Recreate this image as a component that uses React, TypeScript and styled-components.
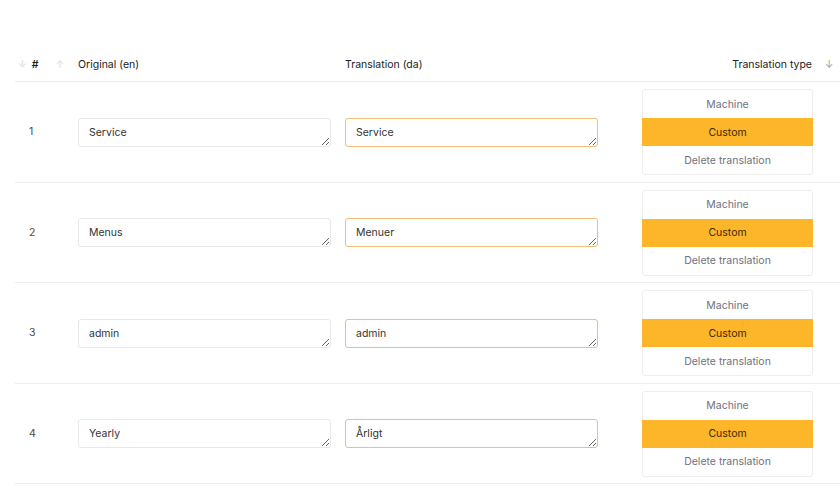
import styled, { createGlobalStyle } from 'styled-components';

const GlobalStyle = createGlobalStyle`
  body {
    margin: 0;
    background: #fff;
    font-family: Inter, "Open Sans", Arial, sans-serif;
    color: #2b2b2b;
  }
`;

type Row = { id: number; original: string; translation: string };

const rows: Row[] = [
  { id: 1, original: 'Service', translation: 'Service' },
  { id: 2, original: 'Menus', translation: 'Menuer' },
  { id: 3, original: 'admin', translation: 'admin' },
  { id: 4, original: 'Yearly', translation: 'Årligt' },
];

const COLS = '63px 267px 297px 171px 1fr';

const Page = styled.div`
  padding: 47px 0 0 15px;
  width: 825px;
`;

const HeaderRow = styled.div`
  display: grid;
  grid-template-columns: ${COLS};
  height: 34px;
  align-items: center;
  border-bottom: 1px solid #ececec;
  font-size: 10.5px;
  color: #222;
`;

const HashCell = styled.div`
  display: flex;
  align-items: center;
  gap: 5px;
  padding-left: 3px;
  font-weight: 600;
`;

const SortArrow = styled.span<{ $light?: boolean }>`
  color: ${(p) => (p.$light ? '#e2e2e2' : '#a0a0a0')};
  font-size: 10px;
  line-height: 1;
`;

const UpArrow = styled(SortArrow)`
  margin-left: 12px;
`;

const HeadText = styled.div<{ $right?: boolean }>`
  text-align: ${(p) => (p.$right ? 'right' : 'left')};
  padding-right: ${(p) => (p.$right ? '1px' : '0')};
`;

const ArrowCell = styled.div`
  padding-left: 12px;
`;

const BodyRow = styled.div`
  display: grid;
  grid-template-columns: ${COLS};
  align-items: center;
  height: 100.5px;
  border-bottom: 1px solid #ededed;
  box-sizing: border-box;
`;

const Num = styled.div`
  padding-left: 14px;
  font-size: 10.5px;
  color: #4a4a4a;
`;

const FieldBox = styled.div<{ $active?: boolean }>`
  box-sizing: border-box;
  width: 253px;
  height: 29px;
  margin-top: 1px;
  border: 1px solid ${(p) => (p.$active ? '#f2bd75' : '#e8e8e8')};
  border-radius: 3px;
  overflow: hidden;
  background: #fff;
`;

const Field = styled.textarea`
  display: block;
  box-sizing: border-box;
  width: 100%;
  height: 100%;
  margin: 0;
  padding: 7px 10px;
  font-family: inherit;
  font-size: 10.5px;
  line-height: 13px;
  color: #333;
  border: none;
  background: transparent;
  outline: none;
  resize: vertical;
  overflow: hidden;
`;

const Group = styled.div`
  display: flex;
  flex-direction: column;
  border: 1px solid #eeeeee;
  border-radius: 3px;
  height: 86px;
  box-sizing: border-box;
  align-self: start;
  margin-top: 7px;
`;

const Choice = styled.div<{ $on?: boolean }>`
  flex: 1;
  display: flex;
  align-items: center;
  justify-content: center;
  font-size: 10.5px;
  color: ${(p) => (p.$on ? '#3a2a05' : '#6f7180')};
  background: ${(p) => (p.$on ? '#fdb52a' : 'transparent')};
  margin: ${(p) => (p.$on ? '0 -1px' : '0')};
`;

export default function App() {
  return (
    <>
      <GlobalStyle />
      <Page>
        <HeaderRow>
          <HashCell>
            <SortArrow $light>↓</SortArrow>
            <span>#</span>
            <UpArrow $light>↑</UpArrow>
          </HashCell>
          <HeadText>Original (en)</HeadText>
          <HeadText>Translation (da)</HeadText>
          <HeadText $right>Translation type</HeadText>
          <ArrowCell>
            <SortArrow>↓</SortArrow>
          </ArrowCell>
        </HeaderRow>
        {rows.map((r) => (
          <BodyRow key={r.id}>
            <Num>{r.id}</Num>
            <FieldBox>
              <Field rows={1} defaultValue={r.original} />
            </FieldBox>
            <FieldBox $active>
              <Field rows={1} defaultValue={r.translation} />
            </FieldBox>
            <Group>
              <Choice>Machine</Choice>
              <Choice $on>Custom</Choice>
              <Choice>Delete translation</Choice>
            </Group>
            <div />
          </BodyRow>
        ))}
      </Page>
    </>
  );
}
